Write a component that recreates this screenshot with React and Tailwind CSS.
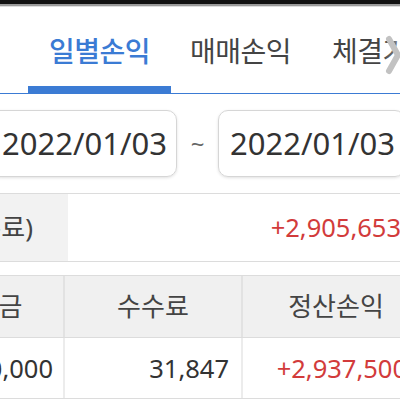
import React from 'react';

const font = { fontFamily: '"Noto Sans", "Noto Sans CJK KR", sans-serif' };

const tabs = ['일별손익', '매매손익', '체결가'];

export default function App() {
  return (
    <div className="w-[400px] h-[400px] overflow-hidden bg-white relative text-[#333]" style={font}>
      <div className="h-[4px] bg-[#111]" />
      <div className="h-[2px] bg-[#9a9a9a]" />
      <div className="h-[1px] bg-[#dedede]" />

      {/* tabs */}
      <div className="relative flex h-[87px] border-b border-[#3b7bd4] pl-[28px] whitespace-nowrap">
        {tabs.map((t, i) => (
          <div
            key={t}
            className={
              'flex flex-col h-full shrink-0 ' +
              (i === 0 ? 'w-[143px]' : i === 1 ? 'ml-[19px]' : 'ml-[41px]')
            }
          >
            <div
              className={
                'flex-1 flex items-center justify-center pt-[8px] text-[28px] tracking-[-0.5px] ' +
                (i === 0 ? 'text-[#3b7bd4] font-medium' : 'text-[#444]')
              }
            >
              {t}
            </div>
            <div className={'h-[7px] ' + (i === 0 ? 'bg-[#3b7bd4]' : '')} />
          </div>
        ))}
        <div className="absolute -right-[2px] top-[26px] w-[20px] h-[44px] flex items-center justify-end bg-gradient-to-r from-white/0 to-white/40">
          <svg width="17" height="40" viewBox="0 0 17 40">
            <polyline points="4,4 13,20 4,36" fill="none" stroke="#c2c2c2" strokeWidth="6" strokeLinecap="round" strokeLinejoin="round" />
          </svg>
        </div>
      </div>

      {/* date range */}
      <div className="flex items-center mt-[16px] -ml-[10px] whitespace-nowrap">
        <div className="w-[187px] h-[67px] shrink-0 rounded-[10px] border border-[#d6d6d6] shadow-[0_1px_3px_rgba(0,0,0,0.12)] flex items-center pl-[11px] text-[31px] text-[#333]">
          2022/01/03
        </div>
        <div className="w-[41px] shrink-0 text-center text-[24px] text-[#666]">~</div>
        <div className="w-[187px] h-[67px] shrink-0 rounded-[10px] border border-[#d6d6d6] shadow-[0_1px_3px_rgba(0,0,0,0.12)] flex items-center pl-[11px] text-[31px] text-[#333]">
          2022/01/03
        </div>
      </div>

      {/* summary row */}
      <div className="flex mt-[16px] h-[69px] border-y border-[#dcdcdc] w-[430px] whitespace-nowrap">
        <div className="w-[68px] shrink-0 bg-[#f2f2f2] flex items-center justify-end pr-[35px] text-[26px] text-[#444]">
          총손익(수수료)
        </div>
        <div className="flex-1 flex items-center justify-end pr-[29px] text-[25.5px] text-[#d23b3b]">
          +2,905,653
        </div>
      </div>

      {/* table */}
      <div className="mt-[13px] -ml-[96px] w-[525px] border-t border-[#dcdcdc] whitespace-nowrap">
        <div className="grid grid-cols-[161px_178px_186px] h-[62px] bg-[#f0f0f0] border-b border-[#dcdcdc] text-[26px] text-[#444]">
          <div className="flex items-center justify-center pl-[6px] border-r-2 border-[#e2e2e2]">매매금</div>
          <div className="flex items-center justify-center border-r-2 border-[#e2e2e2]">수수료</div>
          <div className="flex items-center justify-center">정산손익</div>
        </div>
        <div className="grid grid-cols-[161px_178px_186px] h-[61px] border-b border-[#dcdcdc] text-[25.5px]">
          <div className="flex items-center justify-end pr-[10px] border-r-2 border-[#ececec] text-[#333]">2,710,000</div>
          <div className="flex items-center justify-end pr-[12px] border-r-2 border-[#ececec] text-[#333]">31,847</div>
          <div className="flex items-center justify-end pr-[22px] text-[#d23b3b]">+2,937,500</div>
        </div>
      </div>
    </div>
  );
}
